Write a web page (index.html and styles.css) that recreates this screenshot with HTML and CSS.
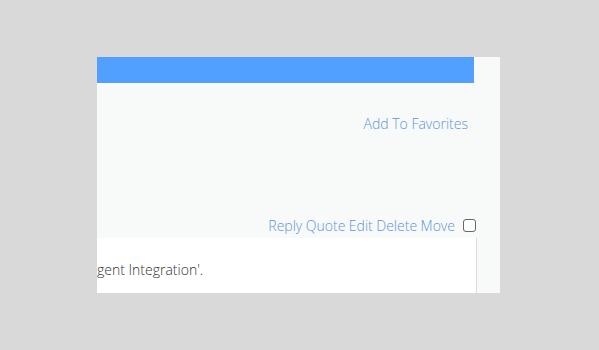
FILE: index.html
```html
<!DOCTYPE html>
<html lang="en">
	<head>
		<meta charset="UTF-8" />
		<meta name="viewport" content="width=device-width, initial-scale=1.0" />
		<title>topic</title>
		<link rel="stylesheet" href="styles.css">
	</head>
	<body>
		<div class="panel">
			<div class="title-bar"></div>
			<div class="fav-row">
				<a href="#">Add To Favorites</a>
			</div>
			<div class="post-tools">
				<a href="#">Reply</a>
				<a href="#">Quote</a>
				<a href="#">Edit</a>
				<a href="#">Delete</a>
				<a href="#">Move</a>
				<input type="checkbox" class="post-check" />
			</div>
			<div class="post-body">
				<p>gent Integration'.</p>
			</div>
		</div>
	</body>
</html>
```

FILE: styles.css
```css
body {
	margin: 0;
	background: #d9d9d9;
	font-family: "Open Sans", Arial, sans-serif;
	font-size: 14px;
	font-weight: 300;
}

.panel {
	margin: 57px 0 0 97px;
	width: 403px;
	height: 236px;
	background: #f8f9f9;
	overflow: hidden;
	display: flex;
	flex-direction: column;
}

.title-bar {
	width: 377px;
	height: 26px;
	background: #519ffe;
}

a {
	color: #5b96e0;
	text-decoration: none;
}

.fav-row {
	margin-top: 31px;
	padding-right: 32px;
	text-align: right;
	line-height: 20px;
}

.post-tools {
	margin-top: 82px;
	padding-right: 24px;
	display: flex;
	justify-content: flex-end;
	align-items: center;
	gap: 3.5px;
	line-height: 20px;
}

.post-check {
	appearance: none;
	width: 13px;
	height: 13px;
	margin: -2px 0 0 4.5px;
	border: 1px solid #666;
	border-radius: 3px;
	background: #fff;
}

.post-body {
	margin-top: 2px;
	width: 379px;
	flex: 1;
	background: #fff;
	border-right: 1px solid #dcdcdc;
}

.post-body p {
	margin: 22px 0 0;
	line-height: 20px;
	color: #333;
}
```
